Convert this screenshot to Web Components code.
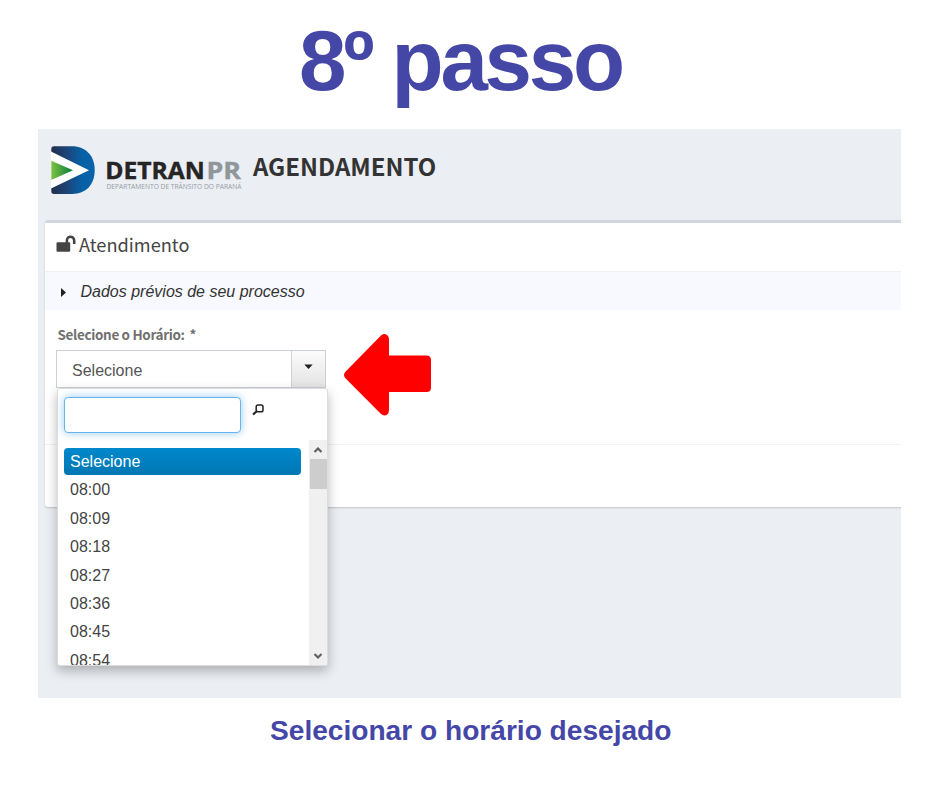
<!DOCTYPE html>
<html lang="pt-BR">
<head>
<meta charset="utf-8">
<title>8º passo</title>
<style>
html,body{margin:0;background:#fff}
body{width:940px;height:788px;overflow:hidden;font-family:"Liberation Sans",Arial,sans-serif}
</style>
</head>
<body>
<step-slide>
  <span slot="title">8º passo</span>
  <booking-screen>
    <brand-header slot="header">AGENDAMENTO</brand-header>
    <service-panel>
      <span slot="heading">Atendimento</span>
      <span slot="details">Dados prévios de seu processo</span>
      <time-picker label="Selecione o Horário:" value="Selecione" options="Selecione,08:00,08:09,08:18,08:27,08:36,08:45,08:54"></time-picker>
    </service-panel>
  </booking-screen>
  <span slot="caption">Selecionar o horário desejado</span>
</step-slide>
<script>
class StepSlide extends HTMLElement{
  constructor(){
    super();
    this.attachShadow({mode:'open'}).innerHTML=`<style>
    :host{display:grid;grid-template-rows:129px 569px 90px;width:940px;height:788px;color:#4547a7;font-weight:700}
    h1{margin:0;padding:12px 0 0 299px;font-size:85.3px;line-height:98px;letter-spacing:-3.25px;white-space:nowrap}
    .shot{padding-left:38px;width:863px}
    p{margin:0;padding:16px 0 0 270px;font-size:28.120px;line-height:34px;white-space:nowrap}
    </style><h1><slot name="title"></slot></h1><div class="shot"><slot></slot></div><p><slot name="caption"></slot></p>`;
  }
}
class BookingScreen extends HTMLElement{
  constructor(){
    super();
    this.attachShadow({mode:'open'}).innerHTML=`<style>
    :host{display:flex;flex-direction:column;width:863px;height:569px;background:#ebeef3;overflow:hidden;font-weight:400;color:#444}
    main{padding-left:7px}
    </style><slot name="header"></slot><main><slot></slot></main>`;
  }
}
class BrandHeader extends HTMLElement{
  constructor(){
    super();
    this.attachShadow({mode:'open'}).innerHTML=`<style>
    :host{display:flex;height:90px;padding-left:13px;box-sizing:border-box;flex:none;color:#333}
    svg{flex:none;margin-top:16px}
    h2{margin:19px 0 0 10px;font:700 24px/36px "Noto Sans CJK SC","Noto Sans",sans-serif}
    </style>
    <svg width="192" height="52" viewBox="51 145 192 52">
      <defs>
        <linearGradient id="b" x1="0" y1="0" x2="1" y2="0"><stop offset="0" stop-color="#232f4c"/><stop offset=".35" stop-color="#1d4476"/><stop offset=".7" stop-color="#0760a6"/><stop offset="1" stop-color="#0a63aa"/></linearGradient>
        <linearGradient id="g" x1="0" y1="0" x2="1" y2="0"><stop offset="0" stop-color="#7fc242"/><stop offset="1" stop-color="#007a3d"/></linearGradient>
      </defs>
      <path d="M54 146.300H72C86 146.300 94.700 156 94.700 170.300S86 194 72 194H54Q51.300 194 51.300 191.300V149Q51.300 146.300 54 146.300Z" fill="url(#b)"/>
      <path d="M51 151.500L89 170.300L51 188.500Z" fill="#fff"/>
      <path d="M51.300 160.700L73 170.300L51.300 180Z" fill="url(#g)"/>
      <g font-family="Open Sans,Noto Sans,sans-serif">
      <text x="105.300" y="178.500" font-size="23.500" font-weight="700" fill="#252525" stroke="#252525" stroke-width=".4" textLength="99.500" lengthAdjust="spacingAndGlyphs">DETRAN</text>
      <text x="206.500" y="178.500" font-size="23.500" font-weight="700" fill="#90979b" stroke="#90979b" stroke-width=".4" textLength="34.500" lengthAdjust="spacingAndGlyphs">PR</text>
      <text x="106.500" y="189.300" font-size="7.200" fill="#989da3" textLength="135" lengthAdjust="spacingAndGlyphs">DEPARTAMENTO DE TRÂNSITO DO PARANÁ</text>
      </g>
    </svg><h2><slot></slot></h2>`;
  }
}
class ServicePanel extends HTMLElement{
  constructor(){
    super();
    this.attachShadow({mode:'open'}).innerHTML=`<style>
    :host{display:flex;flex-direction:column;box-sizing:border-box;width:880px;height:287.500px;margin-top:.5px;border-top:3px solid #d2d6de;border-radius:3px;background:#fff;box-shadow:0 1px 2px rgba(0,0,0,.18)}
    header{display:flex;box-sizing:border-box;flex:none;height:49.500px;padding-left:11px;border-bottom:1px solid #f1f1f4}
    header svg{margin-top:12.500px}
    h3{margin:4.500px 0 0 3px;font:400 18.200px/34px "Noto Sans CJK SC","Noto Sans",sans-serif}
    .details{display:flex;align-items:center;box-sizing:border-box;flex:none;height:38px;padding-top:2px;background:#f8f9fe;padding-left:16px;font-size:16px;font-style:italic;color:#333}
    .details svg{margin-right:14.500px}
    .body{height:134px;flex:none;border-bottom:1px solid #f3f3f3;padding-left:12px}
    </style>
    <header><svg width="20" height="18" viewBox="0 0 20 18"><path d="M1.500 7.300H13Q14.200 7.300 14.200 8.500V15.500Q14.200 16.700 13 16.700H1.500Q.5 16.700 .5 15.500V8.500Q.5 7.300 1.500 7.300Z" fill="#444"/><path d="M10.900 8V5.500C10.900 .4 18.200 .4 18.200 5.500V9" fill="none" stroke="#444" stroke-width="2.600"/></svg><h3><slot name="heading"></slot></h3></header>
    <div class="details"><svg width="5" height="9" viewBox="0 0 5 9"><path d="M0 0L5 4.500L0 9Z" fill="#222"/></svg><slot name="details"></slot></div>
    <div class="body"><slot></slot></div>`;
  }
}
class TimePicker extends HTMLElement{
  connectedCallback(){
    const items=this.getAttribute('options').split(',').map((t,i)=>`<li${i?'':' class="on"'}>${t}</li>`).join('');
    this.attachShadow({mode:'open'}).innerHTML=`<style>
    :host{display:block;position:relative;width:271px}
    label{display:flex;gap:5px;padding:13px 0 0 0.500px;font:700 13.500px/22px "Noto Sans CJK SC","Noto Sans",sans-serif;letter-spacing:-.35px;color:#707070;white-space:nowrap}
    .control{display:flex;box-sizing:border-box;width:270px;height:38px;margin:5px 0 0 -1px;border:1px solid #cbcfd6;background:#fff;font-size:16px;line-height:39px;color:#555}
    .control span{flex:1;padding-left:15px}
    .control i{display:grid;justify-items:center;width:33px;border-left:1px solid #cfd2d6;background:linear-gradient(#fcfcfc,#e3e3e3)}
    .control svg{margin-top:13px}
    .menu{position:absolute;left:0;top:78px;box-sizing:border-box;width:271px;height:278px;border:1px solid #ddd;border-radius:3px;background:#fff;box-shadow:0 5px 12px rgba(0,0,0,.27);display:grid;grid-template-rows:51px 1fr;overflow:visible}
    .search{display:flex;padding:8px 0 0 6px}
    input{box-sizing:border-box;width:177px;height:36px;margin:0;border:1px solid #68b4ee;border-radius:4px;outline:0;box-shadow:0 0 8px rgba(82,168,236,.6);background:#fff}
    .search svg{margin:7px 0 0 11px}
    .list{display:flex;min-height:0;overflow:hidden}
    ul{list-style:none;flex:1;margin:0;padding:8px 8px 0 6px;font-size:16px;color:#444}
    li{box-sizing:border-box;height:27px;margin-bottom:1.400px;padding-left:6px;line-height:28px}
    .on{color:#fff;border-radius:4px;background:linear-gradient(#0088cc,#0077b3)}
    .bar{width:18px;background:#f0f0f0;display:flex;flex-direction:column;align-items:center}
    .bar b{width:17px;height:30px;background:#cdcdcd}
    .bar svg{flex:none}
    .bar .down{margin-top:auto}
    </style>
    <label><span>${this.getAttribute('label')}</span><span>*</span></label>
    <div class="control"><span>${this.getAttribute('value')}</span><i><svg width="9" height="6" viewBox="0 0 9 6"><path d="M.3.500H8.700L4.500 5Z" fill="#222"/></svg></i></div>
    <div class="menu">
      <div class="search"><input aria-label="Filtro"><svg width="13" height="12" viewBox="0 0 13 12" fill="none" stroke="#222"><rect x="4.200" y="1" width="6.800" height="6.800" rx="1.800" stroke-width="1.500"/><path d="M4.500 7.500L1 10.500" stroke-width="2.200"/></svg></div>
      <div class="list"><ul>${items}</ul><div class="bar">
        <svg width="18" height="19" viewBox="0 0 18 19"><path d="M5.500 12L9 8.500L12.500 12" fill="none" stroke="#606060" stroke-width="2.200"/></svg><b></b>
        <svg class="down" width="18" height="19" viewBox="0 0 18 19"><path d="M5.500 8L9 11.500L12.500 8" fill="none" stroke="#606060" stroke-width="2.200"/></svg>
      </div></div>
    </div>
    <pointer-arrow></pointer-arrow>`;
  }
}
class PointerArrow extends HTMLElement{
  constructor(){
    super();
    this.attachShadow({mode:'open'}).innerHTML=`<style>
    :host{display:block;position:absolute;left:287px;top:23.500px}svg{display:block}
    </style><svg width="88" height="83" viewBox="0 0 88 83"><path d="M37 1.500Q40 -1 43 1Q45 2.300 45 5V21.500H82.500Q87 21.500 87 26V53.500Q87 58 82.500 58H45V76Q45 79.500 43 80.800Q40 82.500 37 80L1.200 44Q-1.200 41 1.200 38Z" fill="#f00"/></svg>`;
  }
}
customElements.define('pointer-arrow',PointerArrow);
customElements.define('step-slide',StepSlide);
customElements.define('booking-screen',BookingScreen);
customElements.define('brand-header',BrandHeader);
customElements.define('service-panel',ServicePanel);
customElements.define('time-picker',TimePicker);
</script>
</body>
</html>
